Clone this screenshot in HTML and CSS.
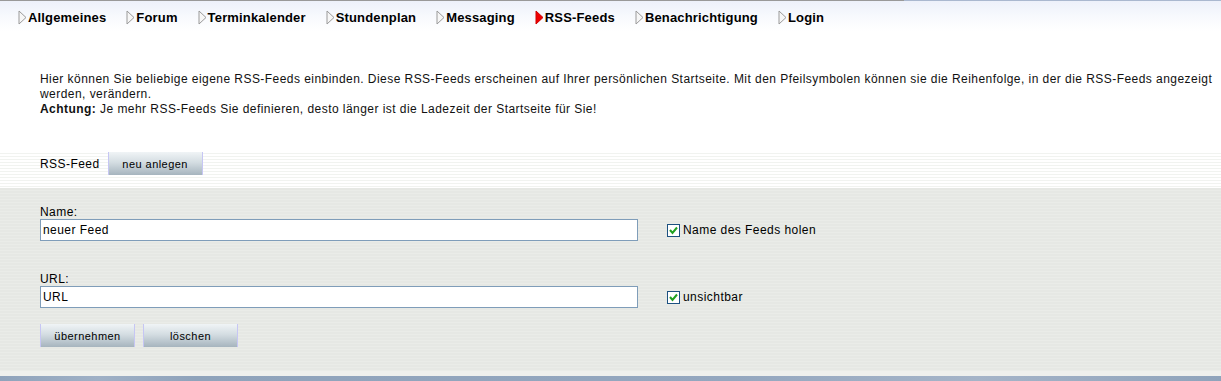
FILE: index.html
```html
<!DOCTYPE html>
<html lang="de">
<head>
    <meta charset="UTF-8">
    <title>RSS-Feeds</title>
    <link rel="stylesheet" href="styles.css">
</head>
<body>
<div class="topline"></div>
<ul class="nav">
    <li><span class="arrow"><svg width="9" height="15" viewBox="0 0 9 15"><polygon points="1,1 8,7.5 1,14" fill="#f6f6f6" stroke="#9a9a9a"/></svg></span>Allgemeines</li>
    <li><span class="arrow"><svg width="9" height="15" viewBox="0 0 9 15"><polygon points="1,1 8,7.5 1,14" fill="#f6f6f6" stroke="#9a9a9a"/></svg></span>Forum</li>
    <li><span class="arrow"><svg width="9" height="15" viewBox="0 0 9 15"><polygon points="1,1 8,7.5 1,14" fill="#f6f6f6" stroke="#9a9a9a"/></svg></span>Terminkalender</li>
    <li><span class="arrow"><svg width="9" height="15" viewBox="0 0 9 15"><polygon points="1,1 8,7.5 1,14" fill="#f6f6f6" stroke="#9a9a9a"/></svg></span>Stundenplan</li>
    <li><span class="arrow"><svg width="9" height="15" viewBox="0 0 9 15"><polygon points="1,1 8,7.5 1,14" fill="#f6f6f6" stroke="#9a9a9a"/></svg></span>Messaging</li>
    <li class="active"><span class="arrow"><svg width="9" height="15" viewBox="0 0 9 15"><polygon points="1,1 8,7.5 1,14" fill="#ee0000" stroke="#d00000"/></svg></span>RSS-Feeds</li>
    <li><span class="arrow"><svg width="9" height="15" viewBox="0 0 9 15"><polygon points="1,1 8,7.5 1,14" fill="#f6f6f6" stroke="#9a9a9a"/></svg></span>Benachrichtigung</li>
    <li><span class="arrow"><svg width="9" height="15" viewBox="0 0 9 15"><polygon points="1,1 8,7.5 1,14" fill="#f6f6f6" stroke="#9a9a9a"/></svg></span>Login</li>
</ul>

<div class="intro">
    Hier können Sie beliebige eigene RSS-Feeds einbinden. Diese RSS-Feeds erscheinen auf Ihrer persönlichen Startseite. Mit den Pfeilsymbolen können sie die Reihenfolge, in der die RSS-Feeds angezeigt werden, verändern.<br>
    <b>Achtung:</b> Je mehr RSS-Feeds Sie definieren, desto länger ist die Ladezeit der Startseite für Sie!
</div>

<div class="feed-bar">
    <span class="feed-title">RSS-Feed</span>
    <button type="button" class="btn">neu anlegen</button>
</div>

<form class="feed-form">
    <div class="field-row">
        <div class="field">
            <label for="feedName">Name:</label>
            <input type="text" id="feedName" value="neuer Feed">
        </div>
        <div class="check">
            <span class="box"><svg width="11" height="11" viewBox="0 0 11 11"><polyline points="2,5 4.5,8 9,2.5" fill="none" stroke="#21a121" stroke-width="2"/></svg></span>
            Name des Feeds holen
        </div>
    </div>
    <div class="field-row">
        <div class="field">
            <label for="feedUrl">URL:</label>
            <input type="text" id="feedUrl" value="URL">
        </div>
        <div class="check">
            <span class="box"><svg width="11" height="11" viewBox="0 0 11 11"><polyline points="2,5 4.5,8 9,2.5" fill="none" stroke="#21a121" stroke-width="2"/></svg></span>
            unsichtbar
        </div>
    </div>
    <div class="actions">
        <button type="button" class="btn">übernehmen</button>
        <button type="button" class="btn">löschen</button>
    </div>
</form>
<div class="bottom-line"></div>
<div class="bottom-bar"></div>
</body>
</html>
```

FILE: styles.css
```css
* {
    box-sizing: border-box;
    margin: 0;
    padding: 0;
}

body {
    background-color: #fff;
    font-family: 'Liberation Sans', Arial, sans-serif;
    font-size: 12px;
    letter-spacing: 0.45px;
    color: #000;
}

.topline {
    height: 1px;
    background: linear-gradient(to right, #999 0, #999 74%, #aab8cf 74%, #aab8cf 100%);
}

.nav {
    list-style: none;
    display: flex;
    gap: 20px;
    height: 30px;
    padding: 6px 0 0 18px;
    background: linear-gradient(to bottom, #edf1fa 0, #f7f9fd 50%, #fff 100%);
}

.nav li {
    display: flex;
    align-items: center;
    height: 20px;
    font-size: 13px;
    font-weight: bold;
    letter-spacing: 0.16px;
}

.arrow {
    display: flex;
    margin-right: 1px;
}

.intro {
    padding: 41px 4px 0 40px;
    line-height: 15px;
    color: #111;
}

.feed-bar {
    display: flex;
    align-items: center;
    gap: 8px;
    height: 37px;
    margin-top: 34px;
    padding: 0 0 12px 40px;
    background: repeating-linear-gradient(to bottom, #fff 0, #fff 2px, #f1f3f0 2px, #f1f3f0 3px);
}

.btn {
    height: 23px;
    width: 95px;
    font-family: 'Liberation Sans', Arial, sans-serif;
    font-size: 11px;
    letter-spacing: 0.45px;
    color: #000;
    border: none;
    border-left: 1px solid #c6c6f4;
    border-right: 1px solid #c6c6f4;
    background: linear-gradient(to bottom, #f0f4f6 0, #d4dde2 45%, #a6b4be 100%);
}

.feed-form {
    padding: 18px 0 24px 40px;
    background: repeating-linear-gradient(to bottom, #e6e8e4 0, #e6e8e4 2px, #eaece8 2px, #eaece8 3px);
}

.field-row {
    display: flex;
    align-items: flex-end;
    gap: 29px;
    margin-bottom: 32px;
}

.field label {
    display: block;
    height: 13px;
    line-height: 13px;
}

.field input {
    display: block;
    width: 598px;
    height: 22px;
    padding: 0 2px;
    border: 1px solid #7f9db9;
    background: #fff;
    font-family: 'Liberation Sans', Arial, sans-serif;
    font-size: 12px;
    letter-spacing: 0.45px;
    color: #000;
}

.check {
    display: flex;
    align-items: center;
    gap: 3px;
    margin-bottom: 4px;
}

.box {
    display: flex;
    align-items: center;
    justify-content: center;
    width: 13px;
    height: 13px;
    border: 1px solid #1c5180;
    background: #fff;
}

.actions {
    display: flex;
    gap: 8px;
    margin-top: -16px;
}

.bottom-line {
    height: 5px;
    background: #eff0ed;
}

.bottom-bar {
    height: 8px;
    background: linear-gradient(to right, #8fa3bb 0, #9fb0c6 8%, #8fa3bb 16%, #94a7bf 60%, #a5b4c8 80%, #8fa3bb 100%);
}
```
